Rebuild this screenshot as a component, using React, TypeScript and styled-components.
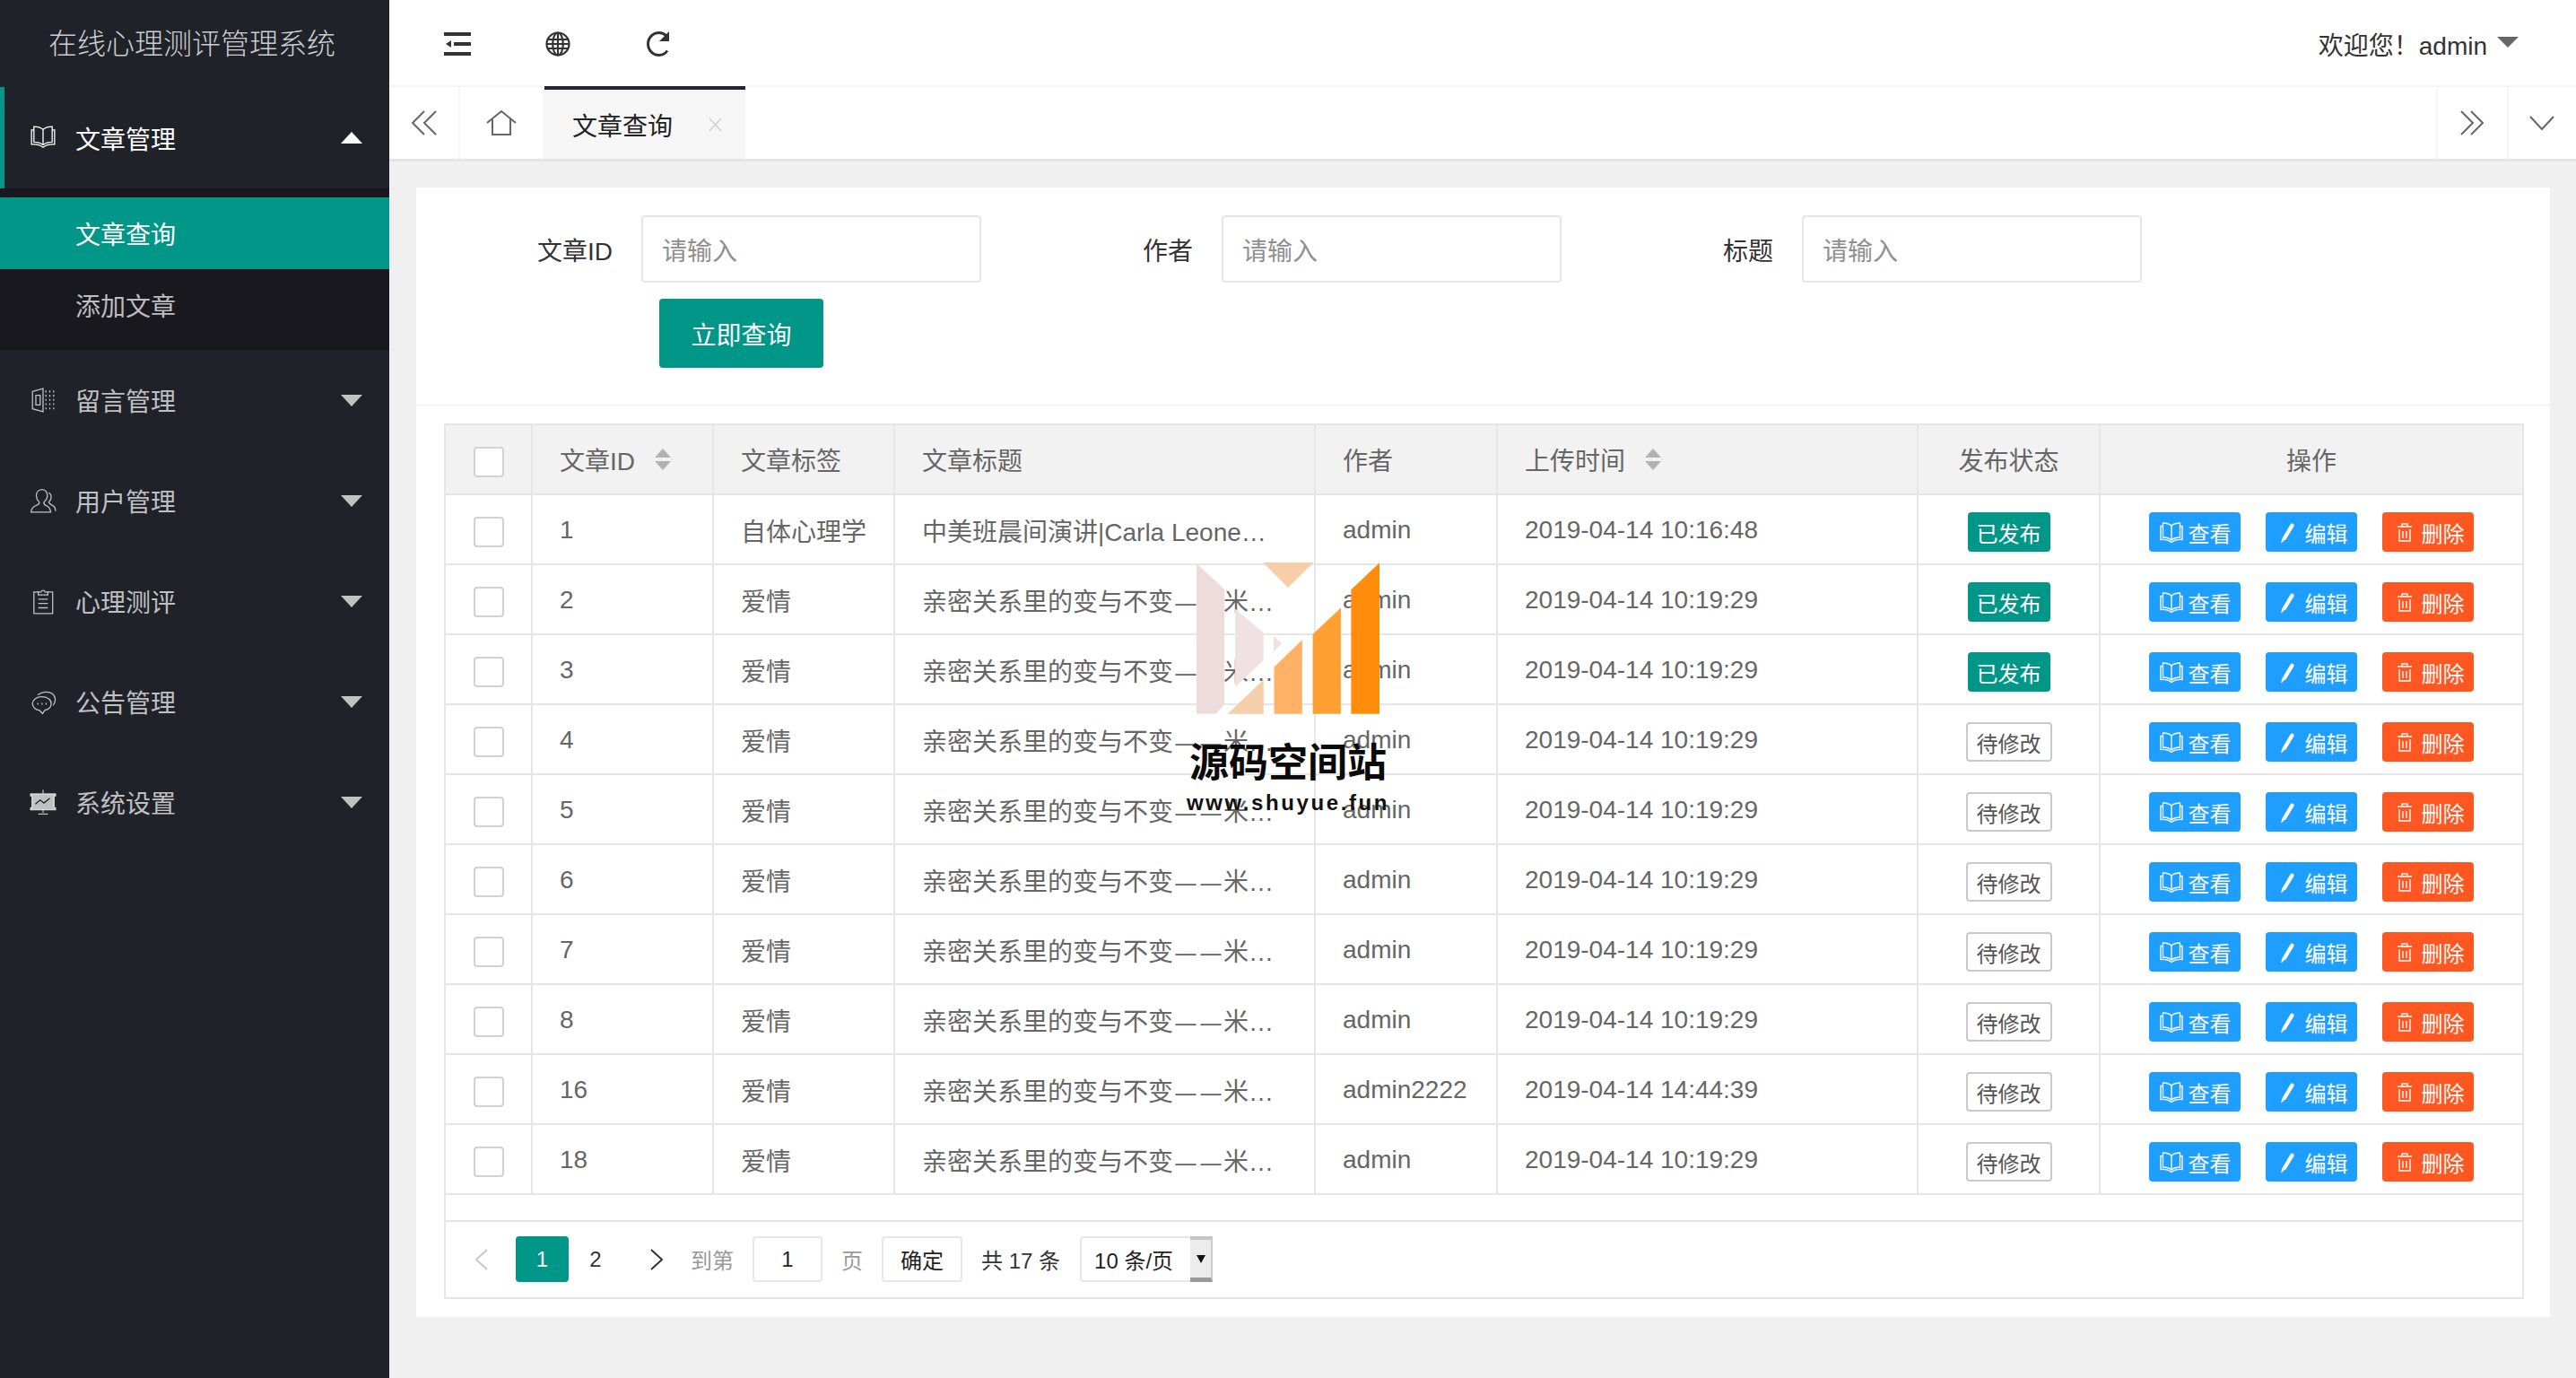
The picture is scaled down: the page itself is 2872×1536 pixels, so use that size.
import React from "react"
import styled, { createGlobalStyle } from "styled-components"

const GlobalStyle = createGlobalStyle`
	html, body {
		margin: 0;
		padding: 0;
		background: #f0f0f0;
	}
	body {
		font-family: "Liberation Sans", "Noto Sans CJK SC", sans-serif;
		font-size: 28px;
		color: #666;
	}
	* {
		box-sizing: border-box;
	}
`

const Page = styled.div`
	position: relative;
	display: flex;
	width: 2872px;
	height: 1536px;
	overflow: hidden;
`

/* sidebar */
const Side = styled.aside`
	flex: 0 0 434px;
	background: #1f2329;
	display: flex;
	flex-direction: column;
`

const Brand = styled.div`
	height: 97px;
	padding: 0 6px 6px 0;
	display: flex;
	align-items: center;
	justify-content: center;
	font-size: 32px;
	font-weight: 300;
	color: rgba(255, 255, 255, 0.78);
`

const MenuItem = styled.div<{ $active?: boolean }>`
	height: ${(p) => (p.$active ? 113 : 112)}px;
	display: flex;
	align-items: center;
	padding-left: ${(p) => (p.$active ? 28 : 33)}px;
	padding-right: 30px;
	gap: 21px;
	font-size: 28px;
	color: ${(p) => (p.$active ? "#fff" : "rgba(255, 255, 255, 0.72)")};
	border-left: ${(p) => (p.$active ? "5px solid #009688" : "none")};
`

const MenuIcon = styled.svg`
	flex: 0 0 30px;
	width: 30px;
	height: 30px;
	fill: none;
	stroke: currentColor;
	stroke-width: 1.2;
`

const MenuLabel = styled.span`
	flex: 1;
`

const Caret = styled.i<{ $up?: boolean }>`
	width: 0;
	height: 0;
	border-left: 12px solid transparent;
	border-right: 12px solid transparent;
	border-top: ${(p) => (p.$up ? "none" : "13px solid #c2c2c2")};
	border-bottom: ${(p) => (p.$up ? "13px solid #fff" : "none")};
`

const SubMenu = styled.div`
	background: #18181e;
	padding: 10px 0;
`

const SubItem = styled.div<{ $active?: boolean }>`
	height: 80px;
	padding-left: 84px;
	display: flex;
	align-items: center;
	background: ${(p) => (p.$active ? "#009688" : "transparent")};
	color: ${(p) => (p.$active ? "#fff" : "rgba(255, 255, 255, 0.72)")};
`

/* main column */
const Main = styled.main`
	flex: 1;
	display: flex;
	flex-direction: column;
	min-width: 0;
`

const TopBar = styled.header`
	height: 97px;
	background: #fff;
	border-bottom: 2px solid #f3f3f3;
	display: flex;
	align-items: center;
	padding: 2px 64px 0 61px;
	color: #333;
`

const ToolIcon = styled.svg`
	width: 30px;
	height: 28px;
	margin-right: 82px;
	fill: none;
	stroke: #333;
	stroke-width: 2.2;
`

const Welcome = styled.div`
	margin-left: auto;
	display: flex;
	align-items: center;
	color: #333;
`

const UserCaret = styled.i`
	width: 0;
	height: 0;
	margin: 0 0 4px 11px;
	border-left: 12px solid transparent;
	border-right: 12px solid transparent;
	border-top: 12px solid #666;
`

const TabBar = styled.nav`
	height: 83px;
	background: #fff;
	border-bottom: 3px solid #e4e4e4;
	display: flex;
	align-items: stretch;
`

const TabCell = styled.div<{ $width: number; $right?: boolean }>`
	flex: 0 0 ${(p) => p.$width}px;
	display: flex;
	align-items: center;
	justify-content: center;
	border-right: ${(p) => (p.$right ? "none" : "2px solid #f6f6f6")};
	border-left: ${(p) => (p.$right ? "2px solid #f6f6f6" : "none")};
	padding-right: ${(p) => (p.$right ? 2 : 0)}px;
	color: #666;
`

const TabSvg = styled.svg<{ $w: number; $h: number }>`
	width: ${(p) => p.$w}px;
	height: ${(p) => p.$h}px;
	fill: none;
	stroke: currentColor;
	stroke-width: 2;
`

const ActiveTab = styled.div`
	flex: 0 0 224px;
	background: #f6f6f6;
	border-top: 4px solid #23262e;
	margin-top: -1px;
	display: flex;
	align-items: center;
	padding: 0 25px 0 31px;
	justify-content: space-between;
	color: #222;
`

const TabClose = styled.svg`
	width: 17px;
	height: 16px;
	fill: none;
	stroke: #d0d0d0;
	stroke-width: 1.6;
`

const TabSpacer = styled.div`
	flex: 1;
`

const Content = styled.div`
	flex: 1;
	background: #f0f0f0;
	padding: 29px 29px 68px 30px;
	display: flex;
	min-height: 0;
`

const Card = styled.section`
	flex: 1;
	background: #fff;
	display: flex;
	flex-direction: column;
	min-width: 0;
`

const FormArea = styled.form`
	height: 244px;
	padding: 31px 31px 0;
	border-bottom: 3px solid #f6f6f6;
`

const FormRow = styled.div`
	display: flex;
	gap: 48px;
`

const Field = styled.label`
	display: flex;
	align-items: center;
	color: #333;
`

const FieldName = styled.span`
	width: 220px;
	padding-right: 32px;
	text-align: right;
`

const TextInput = styled.div`
	width: 379px;
	height: 75px;
	border: 2px solid #e6e6e6;
	border-radius: 4px;
	background: #fff;
	padding-left: 21px;
	display: flex;
	align-items: center;
	color: #8f8f8f;
`

const SearchButton = styled.button`
	display: block;
	width: 183px;
	height: 77px;
	margin: 18px 0 0 240px;
	border: none;
	border-radius: 4px;
	background: #009688;
	color: #fff;
	font: inherit;
`

const TableWrap = styled.div`
	margin: 19px 29px 0 31px;
	border: 2px solid #e6e6e6;
`

const Grid = styled.table`
	width: 100%;
	table-layout: fixed;
	border-collapse: separate;
	border-spacing: 0;
`

const HeadCell = styled.th<{ $center?: boolean; $last?: boolean }>`
	height: 78px;
	padding: 0 ${(p) => (p.$center ? 0 : 30)}px;
	background: #f2f2f2;
	border-right: ${(p) => (p.$last ? "none" : "2px solid #e6e6e6")};
	border-bottom: 2px solid #e6e6e6;
	font-weight: 400;
	color: #666;
	text-align: ${(p) => (p.$center ? "center" : "left")};
`

const Cell = styled.td<{ $center?: boolean; $last?: boolean }>`
	height: 78px;
	padding: ${(p) => (p.$center ? "0" : "2px 30px 0")};
	border-right: ${(p) => (p.$last ? "none" : "2px solid #e6e6e6")};
	border-bottom: 2px solid #e6e6e6;
	color: #666;
	text-align: ${(p) => (p.$center ? "center" : "left")};
	white-space: nowrap;
	overflow: hidden;
`

const Dash = styled.span`
	display: inline-block;
	width: 28px;
	transform: scaleX(0.82);
`

const SortLabel = styled.span`
	display: inline-flex;
	align-items: center;
	gap: 22px;
`

const SortIcon = styled.svg`
	width: 18px;
	height: 24px;
	fill: #b2b2b2;
`

const Check = styled.span`
	display: inline-block;
	width: 34px;
	height: 34px;
	margin-top: 6px;
	border: 2px solid #d2d2d2;
	border-radius: 4px;
	background: #fff;
	vertical-align: middle;
`

const StatusTag = styled.span<{ $published: boolean }>`
	display: inline-flex;
	align-items: center;
	justify-content: center;
	width: ${(p) => (p.$published ? 92 : 96)}px;
	height: 44px;
	margin-top: 6px;
	border-radius: 4px;
	font-size: 24px;
	background: ${(p) => (p.$published ? "#009688" : "#fff")};
	color: ${(p) => (p.$published ? "#fff" : "#555")};
	border: ${(p) => (p.$published ? "none" : "2px solid #c9c9c9")};
`

const Actions = styled.div`
	display: flex;
	justify-content: center;
	gap: 28px;
	margin-top: 6px;
`

const ActionButton = styled.span<{ $bg: string }>`
	display: inline-flex;
	align-items: center;
	justify-content: center;
	gap: 5px;
	width: 102px;
	height: 44px;
	border-radius: 4px;
	background: ${(p) => p.$bg};
	color: #fff;
	font-size: 24px;
`

const ActionIcon = styled.svg`
	width: 28px;
	height: 24px;
	fill: none;
	stroke: #fff;
	stroke-width: 1.3;
`

const BlankRow = styled.div`
	height: 30px;
	border-bottom: 2px solid #e6e6e6;
`

const Pager = styled.div`
	height: 84px;
	padding: 16px 0 0 32px;
	display: flex;
	align-items: flex-start;
	font-size: 24px;
	color: #333;
`

const PagerArrow = styled.svg<{ $off?: boolean }>`
	width: 15px;
	height: 24px;
	margin-top: 14px;
	fill: none;
	stroke: ${(p) => (p.$off ? "#c8c8c8" : "#333")};
	stroke-width: 2;
`

const PageOn = styled.span`
	width: 59px;
	height: 51px;
	margin: 0 0 0 31px;
	border-radius: 4px;
	background: #009688;
	color: #fff;
	display: flex;
	align-items: center;
	justify-content: center;
`

const PageNum = styled.span`
	width: 60px;
	height: 51px;
	margin-right: 31px;
	display: flex;
	align-items: center;
	justify-content: center;
`

const PagerText = styled.span<{ $gap: number; $muted?: boolean }>`
	height: 51px;
	margin-left: ${(p) => p.$gap}px;
	display: flex;
	align-items: center;
	color: ${(p) => (p.$muted ? "#999" : "#333")};
	white-space: nowrap;
`

const PagerBox = styled.span<{ $width: number; $gap: number }>`
	width: ${(p) => p.$width}px;
	height: 51px;
	margin-left: ${(p) => p.$gap}px;
	border: 2px solid #e6e6e6;
	border-radius: 4px;
	background: #fff;
	display: flex;
	align-items: center;
	justify-content: center;
	color: #222;
`

const PageSize = styled.div`
	width: 148px;
	height: 51px;
	margin-left: 22px;
	border: 2px solid #e6e6e6;
	border-radius: 4px 0 0 4px;
	display: flex;
	color: #222;
`

const PageSizeText = styled.span`
	flex: 1;
	padding-left: 14px;
	display: flex;
	align-items: center;
	white-space: nowrap;
`

const PageSizeArrow = styled.span`
	flex: 0 0 25px;
	margin: -2px -2px -2px 0;
	background: #ececec;
	border-top: 4px solid #c4c4c4;
	border-bottom: 5px solid #999;
	border-right: 2px solid #ccc;
	display: flex;
	align-items: center;
	justify-content: center;

	&::after {
		content: "";
		width: 0;
		height: 0;
		border-left: 5px solid transparent;
		border-right: 5px solid transparent;
		border-top: 9px solid #111;
	}
`

/* site stamp that sits over the table */
const Stamp = styled.div`
	position: absolute;
	left: 1300px;
	top: 627px;
	width: 272px;
	display: flex;
	flex-direction: column;
	align-items: center;
	pointer-events: none;
`

const StampLogo = styled.svg`
	width: 204px;
	height: 169px;
`

const StampTitle = styled.div`
	margin-top: 28px;
	font-size: 44px;
	line-height: 54px;
	font-weight: 700;
	color: #0a0a0a;
	white-space: nowrap;
`

const StampUrl = styled.div`
	margin-top: 3px;
	font-size: 24px;
	line-height: 28px;
	font-weight: 700;
	letter-spacing: 2.6px;
	color: #111;
	white-space: nowrap;
`

const BookPaths = () => (
	<>
		<path d="M14 5C11.5 2.8 8 2 4.5 2V18C8 18 11.5 18.8 14 21C16.5 18.8 20 18 23.5 18V2C20 2 16.5 2.8 14 5Z" />
		<path d="M14 5V21" />
		<path d="M4.5 5.5H2V20.5C6.5 20.2 10.5 20.6 14 23.5C17.5 20.6 21.5 20.2 26 20.5V5.5H23.5" />
	</>
)

type Row = {
	id: number
	tag: string
	title: React.ReactNode
	author: string
	time: string
	published: boolean
}

const loveTitle = (
	<>
		亲密关系里的变与不变
		<Dash>—</Dash>
		<Dash>—</Dash>
		米…
	</>
)

const rows: Row[] = [
	{ id: 1, tag: "自体心理学", title: "中美班晨间演讲|Carla Leone…", author: "admin", time: "2019-04-14 10:16:48", published: true },
	{ id: 2, tag: "爱情", title: loveTitle, author: "admin", time: "2019-04-14 10:19:29", published: true },
	{ id: 3, tag: "爱情", title: loveTitle, author: "admin", time: "2019-04-14 10:19:29", published: true },
	{ id: 4, tag: "爱情", title: loveTitle, author: "admin", time: "2019-04-14 10:19:29", published: false },
	{ id: 5, tag: "爱情", title: loveTitle, author: "admin", time: "2019-04-14 10:19:29", published: false },
	{ id: 6, tag: "爱情", title: loveTitle, author: "admin", time: "2019-04-14 10:19:29", published: false },
	{ id: 7, tag: "爱情", title: loveTitle, author: "admin", time: "2019-04-14 10:19:29", published: false },
	{ id: 8, tag: "爱情", title: loveTitle, author: "admin", time: "2019-04-14 10:19:29", published: false },
	{ id: 16, tag: "爱情", title: loveTitle, author: "admin2222", time: "2019-04-14 14:44:39", published: false },
	{ id: 18, tag: "爱情", title: loveTitle, author: "admin", time: "2019-04-14 10:19:29", published: false },
]

const columnWidths = [97, 202, 202, 469, 203, 469, 203, 470]

const menus: { label: string; icon: React.ReactNode }[] = [
	{
		label: "留言管理",
		icon: (
			<>
				<path d="M3 5L14 2V26L3 23Z" />
				<path d="M6.5 9H11V19H6.5Z" />
				<path d="M17 4V24M21 4V24M25 4V24" strokeDasharray="2 2.4" />
			</>
		),
	},
	{
		label: "用户管理",
		icon: (
			<>
				<path d="M13 2.5C8.5 2.5 7 6 7 9C7 12 8.5 14 10 15.5C10.5 17 9.5 18 7 19C4 20 2 21.5 1.5 26H22C21.5 21.5 19.5 20 17 19C14.5 18 14.5 17 15 15.5C16.5 14 18.5 12 18.5 9C18.5 6 17 2.5 13 2.5Z" />
				<path d="M20 5.5C22 7 22.8 9 22.3 11.5C22 13 21 14.5 20 15.5C20 17.5 22 18 24 19C26 20.2 27 22 27 25" />
			</>
		),
	},
	{
		label: "心理测评",
		icon: (
			<>
				<path d="M9 4.5H4.5V27H24V4.5H19" />
				<path d="M9 7.5V4.5H12C12.5 2.5 15.5 2.5 16 4.5H19V7.5Z" />
				<path d="M9 12H19M9 16.5H19M9 21H19" />
			</>
		),
	},
	{
		label: "公告管理",
		icon: (
			<>
				<path d="M12.5 9C7 9 3 12.3 3 16.2C3 20 6.5 23 10.5 23.3L13.5 26.5L16 23C20 22 22.5 19.5 22.5 16C22.5 12 18.5 9 12.5 9Z" />
				<path d="M8.5 7C13 3.5 20 3 24 6C27.5 9 27.5 14 24.5 18" />
				<path d="M8 16.3H9.2M12.3 16.3H13.5M16.6 16.3H17.8" strokeWidth="2" />
			</>
		),
	},
	{
		label: "系统设置",
		icon: (
			<>
				<path d="M14 1.5V5" />
				<path d="M1 5.5H27V7.5H25.5V20H27V22H1V20H2.5V7.5H1Z" fill="currentColor" />
				<path d="M6 16L11 12L15 15L21 10" stroke="#1f2329" />
				<path d="M14 22V25M9 26.5H19" />
			</>
		),
	},
]

export default function App() {
	return (
		<Page>
			<GlobalStyle />
			<Side>
				<Brand>在线心理测评管理系统</Brand>
				<MenuItem $active>
					<MenuIcon viewBox="0 0 28 28">
						<BookPaths />
					</MenuIcon>
					<MenuLabel>文章管理</MenuLabel>
					<Caret $up />
				</MenuItem>
				<SubMenu>
					<SubItem $active>文章查询</SubItem>
					<SubItem>添加文章</SubItem>
				</SubMenu>
				{menus.map((m) => (
					<MenuItem key={m.label}>
						<MenuIcon viewBox="0 0 28 28">{m.icon}</MenuIcon>
						<MenuLabel>{m.label}</MenuLabel>
						<Caret />
					</MenuItem>
				))}
			</Side>

			<Main>
				<TopBar>
					<ToolIcon viewBox="0 0 30 28">
						<path d="M0 3H30M0 25H30M11 14H30" strokeWidth="4" />
						<path d="M2 14L8 10V18Z" fill="#333" stroke="none" />
					</ToolIcon>
					<ToolIcon viewBox="0 0 30 28" strokeWidth="1.2">
						<circle cx="15" cy="14" r="12.5" />
						<ellipse cx="15" cy="14" rx="5.8" ry="12.5" />
						<path d="M15 1.5V26.5M3 9H27M3 19H27M2.5 14H27.5" />
					</ToolIcon>
					<ToolIcon viewBox="0 0 30 28">
						<path d="M25 21.5C22.8 24.6 19.5 26.5 15.8 26.5C9 26.5 3.5 20.9 3.5 14C3.5 7.1 9 1.5 15.8 1.5C19 1.5 21.8 2.8 24 5" strokeWidth="3" />
						<path d="M27 0V11H16Z" fill="#333" stroke="none" />
					</ToolIcon>
					<Welcome>
						欢迎您！admin
						<UserCaret />
					</Welcome>
				</TopBar>

				<TabBar>
					<TabCell $width={79}>
						<TabSvg $w={30} $h={28} viewBox="0 0 30 28">
							<path d="M15 1L2 14L15 27M28 1L15 14L28 27" />
						</TabSvg>
					</TabCell>
					<TabCell $width={94}>
						<TabSvg $w={34} $h={28} viewBox="0 0 34 28" strokeWidth="1.4">
							<path d="M1 14L17 1L33 14M7 10V27H27V10" />
						</TabSvg>
					</TabCell>
					<ActiveTab>
						文章查询
						<TabClose viewBox="0 0 17 16">
							<path d="M2 1L15 15M15 1L2 15" />
						</TabClose>
					</ActiveTab>
					<TabSpacer />
					<TabCell $width={79} $right>
						<TabSvg $w={28} $h={28} viewBox="0 0 28 28">
							<path d="M2 1L15 14L2 27M13 1L26 14L13 27" />
						</TabSvg>
					</TabCell>
					<TabCell $width={77} $right>
						<TabSvg $w={28} $h={18} viewBox="0 0 28 18">
							<path d="M1 2L14 16L27 2" />
						</TabSvg>
					</TabCell>
				</TabBar>

				<Content>
					<Card>
						<FormArea>
							<FormRow>
								<Field>
									<FieldName>文章ID</FieldName>
									<TextInput>请输入</TextInput>
								</Field>
								<Field>
									<FieldName>作者</FieldName>
									<TextInput>请输入</TextInput>
								</Field>
								<Field>
									<FieldName>标题</FieldName>
									<TextInput>请输入</TextInput>
								</Field>
							</FormRow>
							<SearchButton type="button">立即查询</SearchButton>
						</FormArea>

						<TableWrap>
							<Grid>
								<colgroup>
									{columnWidths.map((w, i) => (
										<col key={i} width={w} />
									))}
								</colgroup>
								<thead>
									<tr>
										<HeadCell $center>
											<Check />
										</HeadCell>
										<HeadCell>
											<SortLabel>
												文章ID
												<SortIcon viewBox="0 0 18 24">
													<path d="M9 0L18 10H0ZM0 14H18L9 24Z" />
												</SortIcon>
											</SortLabel>
										</HeadCell>
										<HeadCell>文章标签</HeadCell>
										<HeadCell>文章标题</HeadCell>
										<HeadCell>作者</HeadCell>
										<HeadCell>
											<SortLabel>
												上传时间
												<SortIcon viewBox="0 0 18 24">
													<path d="M9 0L18 10H0ZM0 14H18L9 24Z" />
												</SortIcon>
											</SortLabel>
										</HeadCell>
										<HeadCell $center>发布状态</HeadCell>
										<HeadCell $center $last>
											操作
										</HeadCell>
									</tr>
								</thead>
								<tbody>
									{rows.map((r) => (
										<tr key={r.id}>
											<Cell $center>
												<Check />
											</Cell>
											<Cell>{r.id}</Cell>
											<Cell>{r.tag}</Cell>
											<Cell>{r.title}</Cell>
											<Cell>{r.author}</Cell>
											<Cell>{r.time}</Cell>
											<Cell $center>
												<StatusTag $published={r.published}>{r.published ? "已发布" : "待修改"}</StatusTag>
											</Cell>
											<Cell $center $last>
												<Actions>
													<ActionButton $bg="#1e9fff">
														<ActionIcon viewBox="0 0 28 24">
															<BookPaths />
														</ActionIcon>
														查看
													</ActionButton>
													<ActionButton $bg="#1e9fff">
														<ActionIcon viewBox="0 0 28 24">
															<path d="M9 21L7 23L8 19.5L17 4C18 2.5 20.5 3.5 19.8 5.5L11 20Z" fill="#fff" />
														</ActionIcon>
														编辑
													</ActionButton>
													<ActionButton $bg="#ff5722">
														<ActionIcon viewBox="0 0 28 24">
															<path d="M6 6H22M11 6V3H17V6M8 9V22H20V9M12 11V19M16 11V19" />
														</ActionIcon>
														删除
													</ActionButton>
												</Actions>
											</Cell>
										</tr>
									))}
								</tbody>
							</Grid>
							<BlankRow />
							<Pager>
								<PagerArrow $off viewBox="0 0 15 24">
									<path d="M14 1L2 12L14 23" />
								</PagerArrow>
								<PageOn>1</PageOn>
								<PageNum>2</PageNum>
								<PagerArrow viewBox="0 0 15 24">
									<path d="M1 1L13 12L1 23" />
								</PagerArrow>
								<PagerText $gap={30} $muted>
									到第
								</PagerText>
								<PagerBox $width={78} $gap={21}>
									1
								</PagerBox>
								<PagerText $gap={21} $muted>
									页
								</PagerText>
								<PagerBox $width={90} $gap={21}>
									确定
								</PagerBox>
								<PagerText $gap={21}>共 17 条</PagerText>
								<PageSize>
									<PageSizeText>10 条/页</PageSizeText>
									<PageSizeArrow />
								</PageSize>
							</Pager>
						</TableWrap>
					</Card>
				</Content>
			</Main>

			<Stamp>
				<StampLogo viewBox="405 82 606 502">
					<path d="M405 85L497 170V552L470 583H405Z" fill="#eedcdc" />
					<path d="M533 235L627 315V405L533 495Z" fill="#f0e2e2" />
					<path d="M660 325L688 350L660 378Z" fill="#f0e2e2" />
					<path d="M627 470V583H508Z" fill="#f6cfaa" />
					<path d="M625 82H792L708 165Z" fill="#f6cfa9" />
					<path d="M662 428L755 338V583H662Z" fill="#ffb266" />
					<path d="M790 320L883 232V583H790Z" fill="#ffa033" />
					<path d="M917 172L1011 83V583H917Z" fill="#ff8c0a" />
				</StampLogo>
				<StampTitle>源码空间站</StampTitle>
				<StampUrl>www.shuyue.fun</StampUrl>
			</Stamp>
		</Page>
	)
}
